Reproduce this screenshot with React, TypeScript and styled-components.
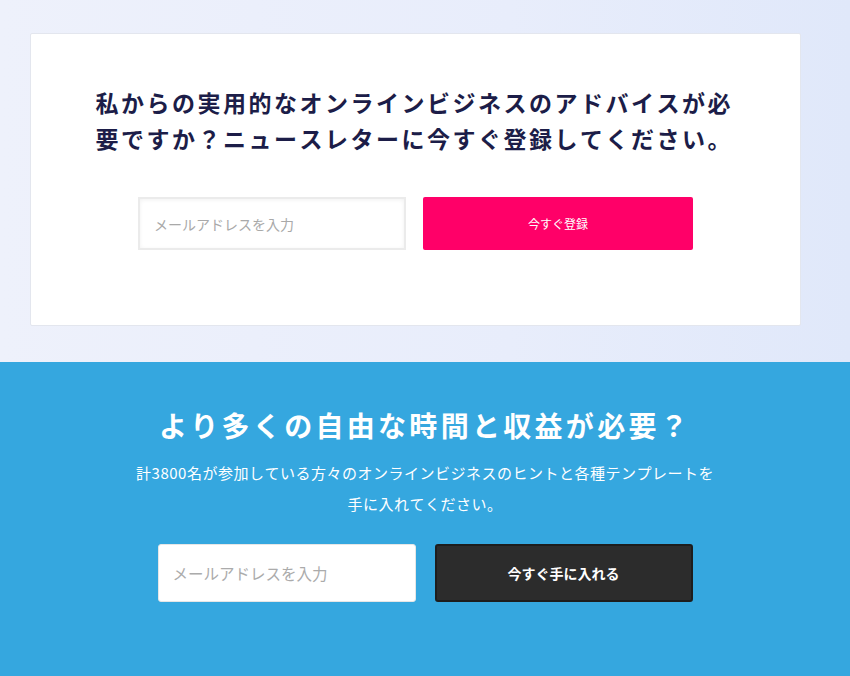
import { createGlobalStyle } from 'styled-components';
import styled from 'styled-components';

const GlobalStyle = createGlobalStyle`
    html, body {
        margin: 0;
        padding: 0;
    }
    body {
        font-family: "Noto Sans CJK JP", "Noto Sans", sans-serif;
        font-kerning: none;
        background: #35a7df;
    }
    * {
        box-sizing: border-box;
    }
`;

const TopSection = styled.section`
    background: linear-gradient(90deg, #eef1fb 0%, #e8edfb 60%, #e0e8fa 100%);
    padding: 33px 49px 36px 30px;
`;

const Card = styled.div`
    background: #ffffff;
    border: 1px solid #e3e6ee;
    border-radius: 2px;
    padding: 50px 20px 75px;
`;

const CardTitle = styled.h2`
    margin: 0 auto;
    max-width: 640px;
    font-size: 23px;
    line-height: 36px;
    font-weight: 700;
    letter-spacing: 2.5px;
    color: #1c1d48;
    white-space: nowrap;
`;

const Form = styled.form<{ $gap: number; $mt: number }>`
    display: flex;
    justify-content: center;
    gap: ${(p) => p.$gap}px;
    margin-top: ${(p) => p.$mt}px;
`;

const CardInput = styled.input`
    width: 268px;
    height: 53px;
    border: 2px solid #ebebeb;
    box-shadow: inset 0 1px 4px rgba(0, 0, 0, 0.06);
    background: #ffffff;
    padding: 0 14px;
    font-family: inherit;
    font-size: 14px;
    color: #333;
    outline: none;
    &::placeholder {
        color: #a9a9a9;
    }
`;

const PinkButton = styled.button`
    width: 270px;
    height: 53px;
    border: none;
    border-radius: 2px;
    background: #ff0068;
    color: #ffffff;
    font-family: inherit;
    font-size: 12px;
    cursor: pointer;
`;

const BlueSection = styled.section`
    background: #35a7df;
    padding: 43px 0 80px;
    text-align: center;
    color: #ffffff;
`;

const BlueTitle = styled.h2`
    margin: 0;
    font-size: 28px;
    line-height: 40px;
    font-weight: 700;
    letter-spacing: 3.3px;
`;

const BlueText = styled.p`
    margin: 12px 0 0;
    font-size: 15px;
    line-height: 31px;
    font-weight: 400;
    letter-spacing: 0.5px;
`;

const BlueInput = styled.input`
    width: 258px;
    height: 58px;
    border: 1px solid #e6e6e6;
    border-radius: 3px;
    background: #ffffff;
    padding: 0 14px;
    font-family: inherit;
    font-size: 15.5px;
    outline: none;
    &::placeholder {
        color: #ababab;
    }
`;

const DarkButton = styled.button`
    width: 258px;
    height: 58px;
    border: 2px solid #1d1d1d;
    border-radius: 3px;
    background: #2c2c2c;
    color: #ffffff;
    font-family: inherit;
    font-size: 14px;
    font-weight: 700;
    cursor: pointer;
`;

const App = () => {
    return (
        <>
            <GlobalStyle />
            <TopSection>
                <Card>
                    <CardTitle>
                        私からの実用的なオンラインビジネスのアドバイスが必
                        <br />
                        要ですか？ニュースレターに今すぐ登録してください。
                    </CardTitle>
                    <Form $gap={17} $mt={41} onSubmit={(e) => e.preventDefault()}>
                        <CardInput type="email" placeholder="メールアドレスを入力" />
                        <PinkButton type="submit">今すぐ登録</PinkButton>
                    </Form>
                </Card>
            </TopSection>
            <BlueSection>
                <BlueTitle>より多くの自由な時間と収益が必要？</BlueTitle>
                <BlueText>
                    計3800名が参加している方々のオンラインビジネスのヒントと各種テンプレートを
                    <br />
                    手に入れてください。
                </BlueText>
                <Form $gap={19} $mt={25} onSubmit={(e) => e.preventDefault()}>
                    <BlueInput type="email" placeholder="メールアドレスを入力" />
                    <DarkButton type="submit">今すぐ手に入れる</DarkButton>
                </Form>
            </BlueSection>
        </>
    );
};

export default App;
